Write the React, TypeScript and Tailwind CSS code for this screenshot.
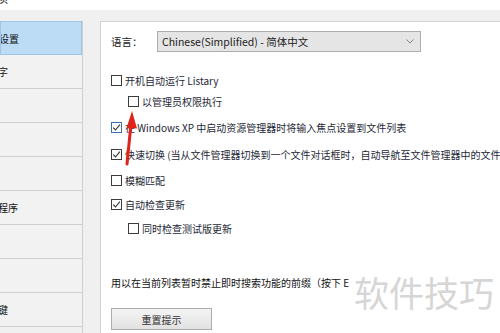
const FONT = { fontFamily: '"Noto Sans CJK SC", "Liberation Sans", sans-serif' };

type Opt = { label: string; checked?: boolean; indent?: boolean; gap: string; blue?: boolean };

const options: Opt[] = [
  { label: "开机自动运行 Listary", gap: "mt-[21px]" },
  { label: "以管理员权限执行", indent: true, gap: "mt-[7px]" },
  { label: "在 Windows XP 中启动资源管理器时将输入焦点设置到文件列表", checked: true, blue: true, gap: "mt-[12px]" },
  { label: "快速切换 (当从文件管理器切换到一个文件对话框时，自动导航至文件管理器中的文件夹)", checked: true, gap: "mt-[13px]" },
  { label: "模糊匹配", gap: "mt-[12px]" },
  { label: "自动检查更新", checked: true, gap: "mt-[10px]" },
  { label: "同时检查测试版更新", indent: true, gap: "mt-[10px]" },
];

const navItems = ["常规设置", "关键字", "外观", "搜索", "菜单", "应用程序", "命令", "路径", "快捷键"];

const CheckBox = ({ checked, blue }: { checked?: boolean; blue?: boolean }) => (
  <div
    className={
      "w-[11px] h-[11px] shrink-0 bg-white border flex items-center justify-center " +
      (blue ? "border-[#3a72b0]" : "border-[#3c3c3c]")
    }
  >
    {checked && (
      <svg width="9" height="9" viewBox="0 0 9 9">
        <path d="M1.2 4.6 L3.5 7 L7.9 1.6" fill="none" stroke="#333" strokeWidth="1.1" />
      </svg>
    )}
  </div>
);

export default function App() {
  return (
    <div className="relative w-[500px] h-[333px] overflow-hidden bg-[#f0f0f0] flex flex-col" style={FONT}>
      {/* title bar remnant */}
      <div className="h-[10px] shrink-0 bg-white overflow-hidden">
        <div className="-mt-[9px] -ml-[4px] text-[12px] leading-[14px] text-[#222]">项</div>
      </div>

      <div className="flex flex-1 pt-[11px]">
        {/* sidebar */}
        <div className="w-[83px] shrink-0 border-r border-[#cfcfcf] flex flex-col overflow-hidden">
          {navItems.map((item, i) => (
            <div
              key={item}
              className={
                "h-[34px] shrink-0 flex items-center overflow-hidden text-[10px] text-[#111] " +
                (i === 0
                  ? "bg-[#bcdcf5] border border-[#a0c6e6]"
                  : "bg-[#f2f2f2] border-b border-[#cfcfcf]")
              }
            >
              <span className="-ml-[22px] whitespace-nowrap">{item}</span>
            </div>
          ))}
        </div>

        {/* content panel */}
        <div className="ml-[17px] flex-1 bg-white border-l border-t border-[#d3d3d3] pl-[10px] pt-[9px] flex flex-col text-[10px] whitespace-nowrap">
          <div className="h-[21px] flex items-center">
            <span className="w-[46px] text-[#222] text-[10.5px]">语言：</span>
            <div className="w-[264px] h-[21px] bg-[#e5e5e5] border border-[#adadad] flex items-center justify-between pl-[4px] pr-[6px] text-[#222] text-[10.5px]">
              <span>Chinese(Simplified) - 简体中文</span>
              <svg width="8" height="5" viewBox="0 0 8 5">
                <path d="M0.5 0.5 L4 4 L7.5 0.5" fill="none" stroke="#777" strokeWidth="0.9" />
              </svg>
            </div>
          </div>

          {options.map((o) => (
            <div key={o.label} className={"h-[14px] flex items-center gap-[3px] " + o.gap + (o.indent ? " ml-[17px]" : "")}>
              <CheckBox checked={o.checked} blue={o.blue} />
              <span className="text-[#1e2836]">{o.label}</span>
            </div>
          ))}

          <div className="mt-[40px] h-[14px] flex items-center text-[#111] overflow-hidden w-[242px]">
            用以在当前列表暂时禁止即时搜索功能的前缀（按下 E
          </div>

          <div className="mt-[19px] w-[101px] h-[22px] border border-[#adadad] bg-gradient-to-b from-[#f4f4f4] to-[#e2e2e2] flex items-center justify-center text-[#333]">
            重置提示
          </div>
        </div>
      </div>

      {/* red annotation arrow */}
      <svg className="absolute left-0 top-0 pointer-events-none" width="500" height="333">
        <line x1="127" y1="164" x2="131" y2="124" stroke="#e0231d" strokeWidth="3" strokeLinecap="round" />
        <polygon points="132,111 126.5,128 137,128.5" fill="#e0231d" />
      </svg>

      {/* watermark */}
      <div className="absolute left-[354px] top-[270px] text-[35px] leading-[44px] text-[#d6d6d6]">
        软件技巧
      </div>
    </div>
  );
}
